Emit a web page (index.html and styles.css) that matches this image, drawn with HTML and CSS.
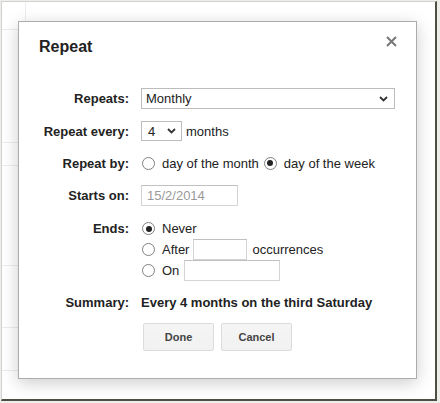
FILE: index.html
```html
<!DOCTYPE html>
<html>
<head>
<meta charset="utf-8">
<link rel="stylesheet" href="styles.css">
</head>
<body>
<div class="frame">
  <div class="bg-lines">
    <span class="vline"></span>
    <span class="hline h1"></span>
    <span class="hline h2"></span>
    <span class="hline h3"></span>
    <span class="hline h4"></span>
    <span class="hline h5"></span>
    <span class="hline h6"></span>
  </div>
  <div class="dialog">
    <div class="title">Repeat</div>
    <svg class="close" width="11" height="11" viewBox="0 0 11 11"><path d="M1 1 L10 10 M10 1 L1 10" stroke="#777" stroke-width="2" fill="none"/></svg>
    <div class="form">
      <div class="label">Repeats:</div>
      <div class="ctl">
        <div class="select wide"><span>Monthly</span><svg class="chev" width="9" height="6" viewBox="0 0 9 6"><path d="M1 1 L4.5 4.5 L8 1" stroke="#333" stroke-width="1.8" fill="none"/></svg></div>
      </div>

      <div class="label">Repeat every:</div>
      <div class="ctl">
        <div class="select narrow"><span>4</span><svg class="chev" width="9" height="6" viewBox="0 0 9 6"><path d="M1 1 L4.5 4.5 L8 1" stroke="#333" stroke-width="1.8" fill="none"/></svg></div>
        <span class="txt after-sel">months</span>
      </div>

      <div class="label">Repeat by:</div>
      <div class="ctl">
        <span class="radio"></span><span class="txt rtxt">day of the month</span>
        <span class="radio on second"></span><span class="txt rtxt">day of the week</span>
      </div>

      <div class="label">Starts on:</div>
      <div class="ctl">
        <div class="input start">15/2/2014</div>
      </div>

      <div class="label top">Ends:</div>
      <div class="ends">
        <div class="eline"><span class="radio on"></span><span class="txt rtxt">Never</span></div>
        <div class="eline"><span class="radio"></span><span class="txt rtxt">After</span><div class="input occ"></div><span class="txt">occurrences</span></div>
        <div class="eline"><span class="radio"></span><span class="txt rtxt">On</span><div class="input ondate"></div></div>
      </div>

      <div class="label">Summary:</div>
      <div class="ctl summary">Every 4 months on the third Saturday</div>

      <div></div>
      <div class="ctl buttons">
        <div class="btn">Done</div>
        <div class="btn">Cancel</div>
      </div>
    </div>
  </div>
</div>
</body>
</html>
```

FILE: styles.css
```css
html, body {
  margin: 0;
  padding: 0;
}
body {
  background: #eeeee8;
  width: 440px;
  height: 403px;
  font-family: "Liberation Sans", Arial, sans-serif;
  color: #222;
}
.frame {
  position: relative;
  box-sizing: border-box;
  margin: 1px 0 0 1px;
  width: 436px;
  height: 400px;
  background: #fff;
  border-top: 1px solid #d2d2d2;
  border-left: 1px solid #d2d2d2;
  border-right: 2px solid #4e4e44;
  border-bottom: 2px solid #4e4e44;
  padding: 19px 0 0 16px;
}
.bg-lines .vline {
  position: absolute;
  left: 23px;
  top: 0;
  width: 1px;
  height: 20px;
  background: #ececec;
}
.bg-lines .hline {
  position: absolute;
  left: 0;
  width: 16px;
  height: 1px;
  background: #ececec;
}
.h1 { top: 27px; }
.h2 { top: 140px; }
.h3 { top: 163px; }
.h4 { top: 263px; }
.h5 { top: 325px; }
.h6 { top: 368px; }
.dialog {
  position: relative;
  box-sizing: border-box;
  width: 399px;
  height: 358px;
  background: #fff;
  border: 1px solid #acacac;
  box-shadow: 0 4px 16px rgba(0, 0, 0, 0.2);
  padding: 15px 20px 0 20px;
}
.title {
  font-size: 16px;
  font-weight: bold;
  line-height: 20px;
  color: #222;
}
.close {
  position: absolute;
  top: 14px;
  right: 19px;
}
.form {
  margin-top: 31px;
  display: grid;
  grid-template-columns: 90px 1fr;
  column-gap: 12px;
  row-gap: 12px;
  align-items: center;
  font-size: 13px;
}
.label {
  text-align: right;
  font-weight: bold;
  color: #222;
  white-space: nowrap;
}
.label.top {
  align-self: start;
  line-height: 21px;
}
.ctl {
  display: flex;
  align-items: center;
  min-height: 20px;
}
.txt {
  white-space: nowrap;
}
.select {
  box-sizing: border-box;
  height: 21px;
  border: 1px solid #bcbcbc;
  display: flex;
  align-items: center;
  justify-content: space-between;
  padding: 0 6px 0 4px;
}
.select.wide { width: 254px; }
.select.narrow { width: 41px; height: 20px; padding: 0 5px 0 6px; }
.after-sel { margin-left: 4px; }
.radio {
  box-sizing: border-box;
  width: 13px;
  height: 13px;
  border: 1px solid #808080;
  border-radius: 50%;
  margin-left: 1px;
  display: inline-flex;
  align-items: center;
  justify-content: center;
  flex: none;
}
.radio.on::after {
  content: "";
  width: 6px;
  height: 6px;
  border-radius: 50%;
  background: #222;
}
.radio.second { margin-left: 5px; }
.rtxt { margin-left: 7px; }
.input {
  box-sizing: border-box;
  height: 21px;
  border: 1px solid #d4d4d4;
  border-top-color: #c0c0c0;
  background: #fff;
}
.input.start {
  width: 97px;
  color: #999;
  padding-left: 5px;
  line-height: 19px;
}
.ends {
  display: flex;
  flex-direction: column;
}
.eline {
  display: flex;
  align-items: center;
  height: 21px;
}
.input.occ {
  width: 54px;
  margin: 0 5px 0 4px;
}
.input.ondate {
  width: 96px;
  margin-left: 5px;
}
.summary {
  font-weight: bold;
  min-height: 18px;
}
.buttons {
  gap: 7px;
  padding-left: 2px;
}
.btn {
  box-sizing: border-box;
  width: 71px;
  height: 28px;
  border: 1px solid #dcdcdc;
  border-radius: 2px;
  background: linear-gradient(#f5f5f5, #f1f1f1);
  font-size: 11px;
  font-weight: bold;
  color: #444;
  display: flex;
  align-items: center;
  justify-content: center;
}
```
